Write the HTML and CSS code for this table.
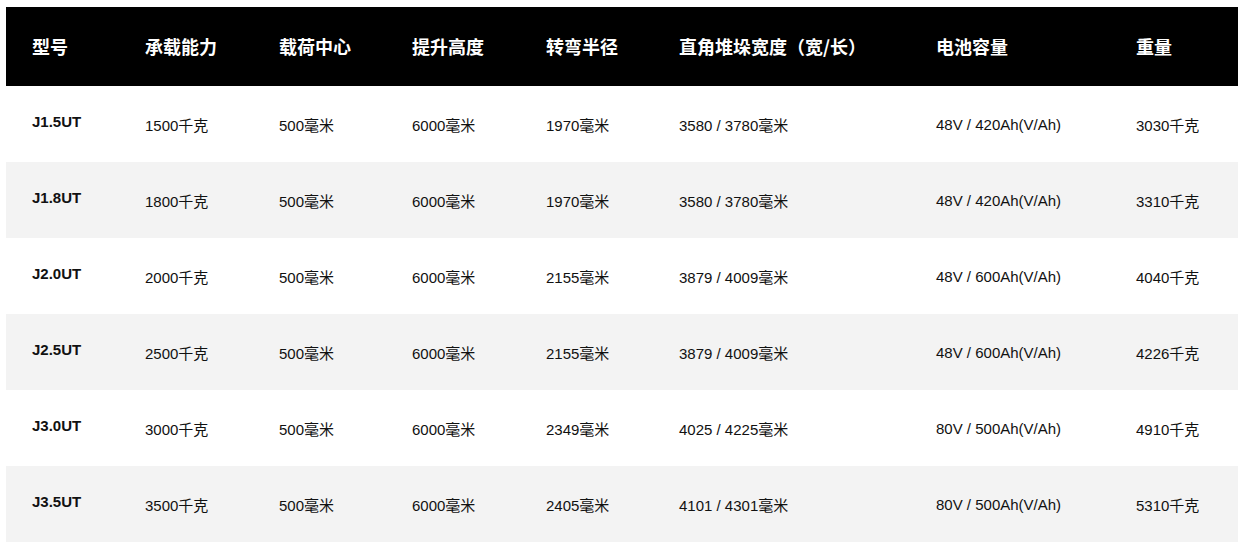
FILE: index.html
```html
<!DOCTYPE html>
<html lang="zh-CN">
<head>
<meta charset="utf-8">
<link rel="stylesheet" href="styles.css">
</head>
<body>
<table class="spec">
  <colgroup>
    <col class="c1"><col class="c2"><col class="c3"><col class="c4"><col class="c5"><col class="c6"><col class="c7"><col class="c8">
  </colgroup>
  <thead>
    <tr><th>型号</th><th>承载能力</th><th>载荷中心</th><th>提升高度</th><th>转弯半径</th><th>直角堆垛宽度（宽/长）</th><th>电池容量</th><th>重量</th></tr>
  </thead>
  <tbody>
    <tr><td class="model">J1.5UT</td><td>1500千克</td><td>500毫米</td><td>6000毫米</td><td>1970毫米</td><td>3580 / 3780毫米</td><td>48V / 420Ah(V/Ah)</td><td>3030千克</td></tr>
    <tr><td class="model">J1.8UT</td><td>1800千克</td><td>500毫米</td><td>6000毫米</td><td>1970毫米</td><td>3580 / 3780毫米</td><td>48V / 420Ah(V/Ah)</td><td>3310千克</td></tr>
    <tr><td class="model">J2.0UT</td><td>2000千克</td><td>500毫米</td><td>6000毫米</td><td>2155毫米</td><td>3879 / 4009毫米</td><td>48V / 600Ah(V/Ah)</td><td>4040千克</td></tr>
    <tr><td class="model">J2.5UT</td><td>2500千克</td><td>500毫米</td><td>6000毫米</td><td>2155毫米</td><td>3879 / 4009毫米</td><td>48V / 600Ah(V/Ah)</td><td>4226千克</td></tr>
    <tr><td class="model">J3.0UT</td><td>3000千克</td><td>500毫米</td><td>6000毫米</td><td>2349毫米</td><td>4025 / 4225毫米</td><td>80V / 500Ah(V/Ah)</td><td>4910千克</td></tr>
    <tr><td class="model">J3.5UT</td><td>3500千克</td><td>500毫米</td><td>6000毫米</td><td>2405毫米</td><td>4101 / 4301毫米</td><td>80V / 500Ah(V/Ah)</td><td>5310千克</td></tr>
  </tbody>
</table>
</body>
</html>
```
FILE: styles.css
```css
html, body {
  margin: 0;
  padding: 0;
  background: #ffffff;
}
body {
  padding: 7px 8px 0 6px;
  font-family: "Liberation Sans", Arial, "Noto Sans CJK SC", sans-serif;
  color: #111;
}
.spec {
  width: 1232px;
  border-collapse: collapse;
  table-layout: fixed;
}
.c1 { width: 113px; }
.c2 { width: 134px; }
.c3 { width: 133px; }
.c4 { width: 134px; }
.c5 { width: 133px; }
.c6 { width: 257px; }
.c7 { width: 200px; }
.c8 { width: 128px; }
.spec th {
  background: #000;
  color: #fff;
  height: 79px;
  padding: 0 0 1px 26px;
  text-align: left;
  font-size: 18px;
  font-weight: bold;
  font-family: "Noto Sans CJK SC", "Liberation Sans", sans-serif;
  box-sizing: border-box;
  white-space: nowrap;
}
.spec td {
  height: 76px;
  padding: 0 0 0 26px;
  font-size: 15px;
  text-align: left;
  vertical-align: middle;
  box-sizing: border-box;
  white-space: nowrap;
}
.spec tbody tr:nth-child(even) td {
  background: #f3f3f3;
}
.spec td.model {
  font-weight: bold;
  padding-bottom: 6px;
}
```
